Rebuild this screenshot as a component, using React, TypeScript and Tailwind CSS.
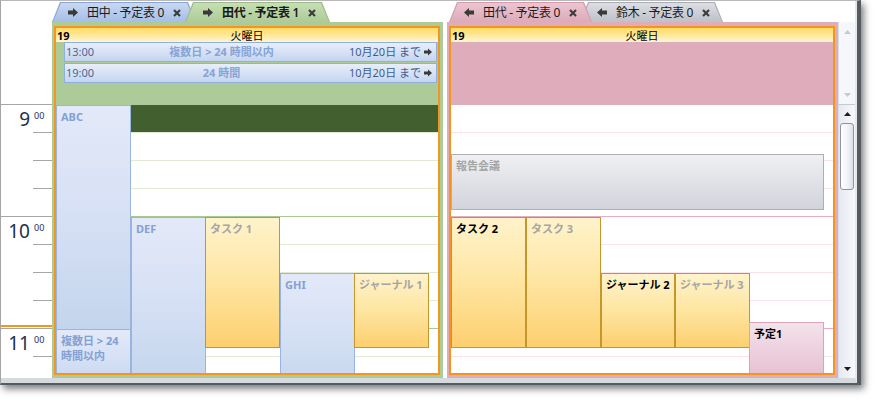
import React from 'react';

type Tone = 'blue' | 'task' | 'pink' | 'gray';
type Ink = 'blue' | 'gray' | 'black';

type ApptData = {
  x: number;
  y: number;
  w: number;
  h: number;
  tone: Tone;
  ink: Ink;
  label: React.ReactNode;
};

const boxTone: Record<Tone, string> = {
  blue: 'border-[#98b5e2] bg-gradient-to-b from-[#e3e9f8] via-[#d6e0f5] to-[#c3d5ec]',
  task: 'border-[#c6962c] bg-gradient-to-b from-[#fff3cc] via-[#fee5a0] to-[#fdcf6e]',
  pink: 'border-[#dba2bc] bg-gradient-to-b from-[#f3e3eb] to-[#e6bcd0]',
  gray: 'border-[#abb0b8] bg-gradient-to-b from-[#f0f0f3] to-[#d2d4db]',
};

const inkTone: Record<Ink, string> = {
  blue: 'text-[#83a0d3]',
  gray: 'text-[#a5a5a5]',
  black: 'text-black',
};

const leftAppts: ApptData[] = [
  { x: 0, y: 0, w: 75, h: 225, tone: 'blue', ink: 'blue', label: 'ABC' },
  {
    x: 0,
    y: 224,
    w: 75,
    h: 60,
    tone: 'blue',
    ink: 'blue',
    label: (
      <>
        複数日 &gt; 24
        <br />
        時間以内
      </>
    ),
  },
  { x: 75, y: 112, w: 75, h: 170, tone: 'blue', ink: 'blue', label: 'DEF' },
  { x: 149, y: 112, w: 75, h: 131, tone: 'task', ink: 'gray', label: 'タスク 1' },
  { x: 224, y: 168, w: 75, h: 120, tone: 'blue', ink: 'blue', label: 'GHI' },
  { x: 298, y: 168, w: 75, h: 75, tone: 'task', ink: 'gray', label: 'ジャーナル 1' },
];

const rightAppts: ApptData[] = [
  { x: 0, y: 49, w: 373, h: 56, tone: 'gray', ink: 'gray', label: '報告会議' },
  { x: 0, y: 112, w: 75, h: 131, tone: 'task', ink: 'black', label: 'タスク 2' },
  { x: 75, y: 112, w: 75, h: 131, tone: 'task', ink: 'gray', label: 'タスク 3' },
  { x: 150, y: 168, w: 74, h: 75, tone: 'task', ink: 'black', label: 'ジャーナル 2' },
  { x: 224, y: 168, w: 75, h: 75, tone: 'task', ink: 'gray', label: 'ジャーナル 3' },
  { x: 298, y: 217, w: 75, h: 60, tone: 'pink', ink: 'black', label: '予定1' },
];

// block arrow, like the tab / "until" markers
function ArrowR({ w = 10, h = 9, flip = false }: { w?: number; h?: number; flip?: boolean }) {
  return (
    <svg width={w} height={h} viewBox="0 0 10 9" className="block shrink-0 text-[#3a3a3a]">
      <path d={flip ? 'M10 2.5H5V0L0 4.5L5 9V6.5H10Z' : 'M0 2.5H5V0L10 4.5L5 9V6.5H0Z'} fill="currentColor" />
    </svg>
  );
}

function Close() {
  return (
    <svg width="8" height="8" viewBox="0 0 8 8" className="block shrink-0 text-[#3d3d3d]">
      <path d="M1 1L7 7M7 1L1 7" stroke="currentColor" strokeWidth="2.2" />
    </svg>
  );
}

function Tri({ up, faint }: { up?: boolean; faint?: boolean }) {
  return (
    <svg width="7" height="4" viewBox="0 0 7 4" className={faint ? 'text-[#c5c9d1]' : 'text-[#1c1c1c]'}>
      <path d={up ? 'M0 4L3.5 0L7 4Z' : 'M0 0L3.5 4L7 0Z'} fill="currentColor" />
    </svg>
  );
}

function Tab({
  label,
  flip,
  edge,
  fill,
  bold,
  className,
  inner,
}: {
  label: string;
  flip?: boolean;
  edge: string;
  fill: string;
  bold?: boolean;
  className: string;
  inner: string;
}) {
  return (
    <div
      className={`h-[20px] pt-[1px] px-[1px] ${edge} [clip-path:polygon(8px_0,calc(100%_-_8px)_0,100%_100%,0_100%)] ${className}`}
    >
      <div
        className={`h-full flex items-center ${inner} ${fill} [clip-path:polygon(8px_0,calc(100%_-_8px)_0,100%_100%,0_100%)] text-[12px] leading-none text-[#1b1b1b] ${bold ? 'font-semibold' : ''}`}
      >
        <ArrowR w={10} h={9} flip={flip} />
        <span className="ml-[9px] whitespace-nowrap tracking-[-0.3px]">{label}</span>
        <span className="ml-[9px]">
          <Close />
        </span>
      </div>
    </div>
  );
}

function Appt({ a }: { a: ApptData }) {
  return (
    <div
      className={`absolute border ${boxTone[a.tone]} ${inkTone[a.ink]} pl-[4px] pt-[3px] text-[11px] font-bold leading-[15px] overflow-hidden`}
      style={{ left: a.x, top: a.y, width: a.w, height: a.h }}
    >
      {a.label}
    </div>
  );
}

function AllDay({ time, title }: { time: string; title: string }) {
  return (
    <div className="h-[20px] mb-[1px] flex items-center border border-[#8eb0e0] bg-gradient-to-b from-[#e8eefa] to-[#c5d5ef] text-[11px] pl-[1px] pr-[4px]">
      <span className="text-[#4a6894]">{time}</span>
      <span className="flex-1 text-center font-bold text-[#86a4d6]">{title}</span>
      <span className="text-[#3f5d8c]">10月20日 まで</span>
      <span className="ml-[3px]">
        <ArrowR w={8} h={8} />
      </span>
    </div>
  );
}

function DayColumn({
  panel,
  hourLine,
  quarterLine,
  allDay,
  children,
}: {
  panel: string;
  hourLine: string;
  quarterLine: string;
  allDay?: React.ReactNode;
  children: React.ReactNode;
}) {
  return (
    <div className={`h-[356px] pt-[4px] pl-[2px] pr-[3px] pb-[3px] ${panel}`}>
      <div className="h-full border-2 border-[#f4951e] flex flex-col">
        <div className="h-[14px] grid grid-cols-[1fr_auto_1fr] items-center bg-gradient-to-b from-[#ffdb66] via-[#ffe796] to-[#fff6d6] text-[11px] leading-none">
          <span className="pl-[1px] font-bold text-black">19</span>
          <span className="text-black">火曜日</span>
          <span />
        </div>
        <div className="h-[63px] pl-[8px] pr-[1px]">{allDay}</div>
        <div className="relative flex-1 bg-white overflow-hidden flex flex-col">
          {Array.from({ length: 10 }).map((_, i) => (
            <div key={i} className={`h-[28px] shrink-0 border-b ${i % 4 === 3 ? hourLine : quarterLine}`} />
          ))}
          {children}
        </div>
      </div>
    </div>
  );
}

function HourBlock({ h }: { h: string }) {
  return (
    <div className="h-[112px] shrink-0 flex border-b border-[#a6a6a6]">
      <div className="w-[32px] text-right pr-[3px] pt-[5px] text-[19px] leading-none text-[#1e3150]">{h}</div>
      <div className="flex-1 flex flex-col">
        <div className="h-[28px] border-b border-[#a6a6a6] pt-[6px] pl-[1px] text-[9px] leading-none text-[#1e3150]">
          00
        </div>
        <div className="h-[28px] border-b border-[#a6a6a6]" />
        <div className="h-[28px] border-b border-[#a6a6a6]" />
      </div>
    </div>
  );
}

function TimeColumn() {
  return (
    <div className="relative w-[51px] shrink-0 bg-white flex flex-col overflow-hidden">
      <div className="h-[104px] shrink-0 border-b border-[#a6a6a6]" />
      <HourBlock h="9" />
      <HourBlock h="10" />
      <HourBlock h="11" />
      <div className="absolute left-0 right-0 top-[324px] h-[2px] bg-[#f4951e]" />
    </div>
  );
}

function ScrollBar() {
  return (
    <div className="w-[17px] shrink-0 flex flex-col">
      <div className="h-[21px] bg-white" />
      <div className="h-[83px] border-l border-b border-l-[#d9dde4] border-b-[#c6cad3] bg-[#f6f7fb] flex flex-col items-center justify-between pt-[8px] pb-[7px]">
        <Tri up faint />
        <Tri faint />
      </div>
      <div className="flex-1 border-l border-[#d9dde4] bg-gradient-to-r from-[#e6e9f1] to-[#f7f8fb] flex flex-col">
        <div className="h-[18px] flex items-center justify-center">
          <Tri up />
        </div>
        <div className="ml-[1px] mr-[1px] h-[67px] rounded-[3px] border border-[#8f949d] bg-gradient-to-r from-white via-[#f3f4f8] to-[#dde1ea]" />
        <div className="flex-1" />
        <div className="h-[18px] flex items-center justify-center">
          <Tri />
        </div>
      </div>
    </div>
  );
}

export default function App() {
  return (
    <div className="w-[878px] h-[401px] bg-white overflow-hidden font-['Noto_Sans','Noto_Sans_CJK_JP',sans-serif]">
      <div className="w-[861px] h-[385px] border-l border-t border-r-4 border-b-2 border-l-[#a5a5a5] border-t-[#b9b9b9] border-r-[#555c61] border-b-[#555c61] shadow-[3px_4px_7px_rgba(0,0,0,0.5)] flex">
        <div className="flex-1 flex border-r-2 border-b-[5px] border-r-[#e6e9ec] border-b-[#d5dade]">
          <TimeColumn />

          {/* left schedule */}
          <div className="w-[391px] shrink-0 flex flex-col">
            <div className="h-[21px] flex items-end bg-white">
              <Tab
                label="田中 - 予定表 0"
                edge="bg-[#8ba6d3]"
                fill="bg-gradient-to-b from-[#c8d8f2] to-[#a5bee6]"
                className="w-[144px]"
                inner="pl-[15px]"
              />
              <Tab
                label="田代 - 予定表 1"
                edge="bg-[#9dbb88]"
                fill="bg-gradient-to-b from-[#c6dfb3] to-[#adcb98]"
                bold
                className="w-[145px] -ml-[11px] relative z-10"
                inner="pl-[17px]"
              />
            </div>
            <DayColumn
              panel="bg-[#adcb98]"
              hourLine="border-[#a9c993]"
              quarterLine="border-[#e2e9d3]"
              allDay={
                <>
                  <AllDay time="13:00" title="複数日 > 24 時間以内" />
                  <AllDay time="19:00" title="24 時間" />
                </>
              }
            >
              <div className="absolute left-[75px] right-0 top-0 h-[27px] bg-[#425f30]" />
              {leftAppts.map((a, i) => (
                <Appt key={i} a={a} />
              ))}
            </DayColumn>
          </div>

          <div className="w-[4px] shrink-0 bg-white" />

          {/* right schedule */}
          <div className="w-[391px] shrink-0 flex flex-col">
            <div className="h-[21px] flex items-end bg-white">
              <Tab
                label="田代 - 予定表 0"
                flip
                edge="bg-[#d59aae]"
                fill="bg-gradient-to-b from-[#ecc5d1] to-[#dcaab9]"
                className="w-[143px] ml-[2px] relative z-10"
                inner="pl-[14px]"
              />
              <Tab
                label="鈴木 - 予定表 0"
                flip
                edge="bg-[#a9adb5]"
                fill="bg-gradient-to-b from-[#dcdee3] to-[#bdc1c8]"
                className="w-[143px] -ml-[12px]"
                inner="pl-[16px]"
              />
            </div>
            <DayColumn panel="bg-[#dfacbb]" hourLine="border-[#e6adc0]" quarterLine="border-[#fae3ea]">
              {rightAppts.map((a, i) => (
                <Appt key={i} a={a} />
              ))}
            </DayColumn>
          </div>

          <ScrollBar />
        </div>
      </div>
    </div>
  );
}
